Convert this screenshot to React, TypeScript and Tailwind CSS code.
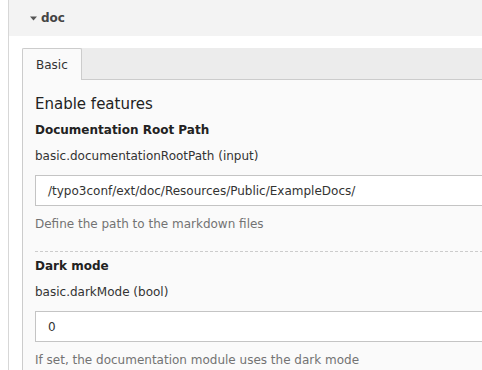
export default function App() {
  return (
    <div className="h-[370px] w-[482px] overflow-hidden bg-white font-['DejaVu_Sans',Verdana,sans-serif] text-[12px] text-[#333]">
      <div className="ml-2 h-full w-[600px] border-l border-[#d7d7d7]">
        <div className="flex h-9 items-center bg-[#f3f3f3] pl-[21px]">
          <svg width="7" height="5" viewBox="0 0 7 5" className="mr-[4px]">
            <path d="M0 0.5 L7 0.5 L3.5 4.5 Z" fill="#555" />
          </svg>
          <span className="font-bold text-[#444]">doc</span>
        </div>

        <div className="ml-[13px] pt-3">
          <div className="flex h-8 border-b border-[#ccc] bg-[#ececec]">
            <div className="-mb-px flex h-8 items-center rounded-t-[2px] border border-b-0 border-[#ccc] bg-[#fafafa] px-[13px]">
              Basic
            </div>
          </div>

          <div className="h-[300px] border-l border-[#ccc] bg-[#fafafa] pl-3 pt-[14px]">
            <h2 className="text-[15px] leading-5 text-[#222]">Enable features</h2>

            <div className="mt-2 font-bold leading-4 text-[#222]">Documentation Root Path</div>
            <div className="mt-[10px] leading-4">basic.documentationRootPath (input)</div>
            <div className="mt-[11px] flex h-[31px] items-center border border-[#c4c4c4] bg-white pl-3">
              /typo3conf/ext/doc/Resources/Public/ExampleDocs/
            </div>
            <div className="mt-[10px] leading-4 text-[#737373]">Define the path to the markdown files</div>

            <div className="mt-[19px] border-t border-dashed border-[#ccc]" />

            <div className="mt-[6px] font-bold leading-4 text-[#222]">Dark mode</div>
            <div className="mt-[10px] leading-4">basic.darkMode (bool)</div>
            <div className="mt-[11px] flex h-[31px] items-center border border-[#c4c4c4] bg-white pl-3">
              0
            </div>
            <div className="mt-[10px] leading-4 text-[#737373]">
              If set, the documentation module uses the dark mode
            </div>
          </div>
        </div>
      </div>
    </div>
  );
}
